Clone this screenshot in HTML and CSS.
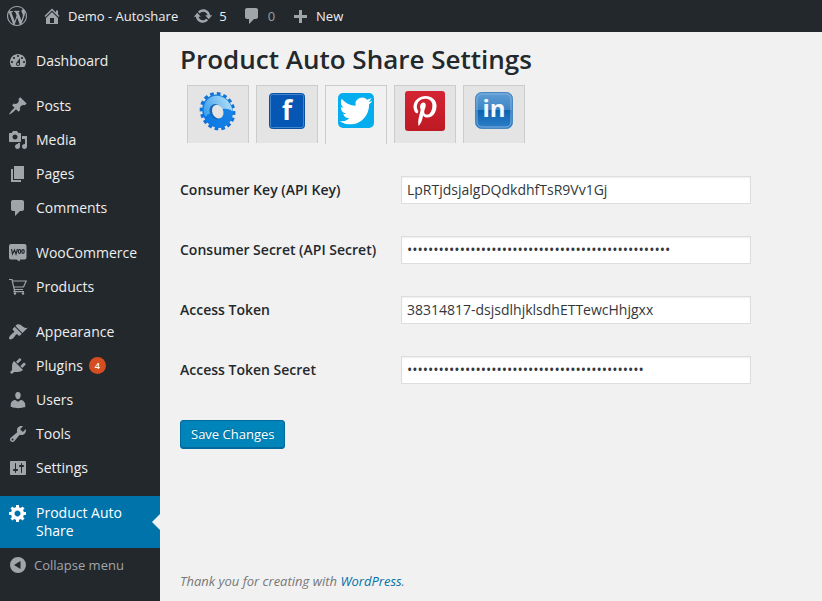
FILE: index.html
```html
<!DOCTYPE html>
<html lang="en">
<head>
<meta charset="utf-8">
<meta name="viewport" content="width=device-width, initial-scale=1">
<title>Product Auto Share Settings</title>
<link rel="stylesheet" href="styles.css">
</head>
<body>
<header class="adminbar">
  <a class="bar-item" href="#" aria-label="About WordPress"><svg class="icon" viewBox="0 0 20 20"><path d="M20 10c0-5.51-4.49-10-10-10C4.48 0 0 4.49 0 10c0 5.52 4.48 10 10 10 5.51 0 10-4.48 10-10zM7.78 15.37L4.37 6.22c.55-.02 1.17-.08 1.17-.08.5-.06.44-1.13-.06-1.11 0 0-1.45.11-2.37.11-.18 0-.37 0-.58-.01C4.12 2.69 6.87 1.11 10 1.11c2.33 0 4.45.87 6.05 2.34-.68-.11-1.65.39-1.65 1.58 0 .74.45 1.36.9 2.1.35.61.55 1.36.55 2.46 0 1.49-1.4 5-1.4 5l-3.03-8.37c.54-.02.82-.17.82-.17.5-.05.44-1.25-.06-1.22 0 0-1.44.12-2.38.12-.87 0-2.33-.12-2.33-.12-.5-.03-.56 1.2-.06 1.22l.92.08 1.26 3.41zM17.41 10c.24-.64.74-1.87.43-4.25.7 1.29 1.05 2.71 1.05 4.25 0 3.29-1.73 6.24-4.4 7.78.97-2.59 1.94-5.2 2.92-7.78zM6.1 18.09C3.12 16.65 1.11 13.53 1.11 10c0-1.3.23-2.48.72-3.59C3.25 10.3 4.67 14.2 6.1 18.09zm4.03-6.63l2.58 6.98c-.86.29-1.76.45-2.71.45-.79 0-1.57-.11-2.29-.33.81-2.38 1.62-4.74 2.42-7.1z"/></svg></a>
  <a class="bar-item" href="#"><svg class="icon" viewBox="0 0 20 20"><path d="M16 8.5l1.53 1.53-1.06 1.06L10 4.6l-6.47 6.49-1.06-1.06L10 2.5l4 4v-2h2v4zm-6-2.46l6 5.99V18H4v-5.97zM12 17v-5H8v5h4z"/></svg>Demo - Autoshare</a>
  <a class="bar-item" href="#"><svg class="icon" viewBox="0 0 20 20"><path d="M10.2 3.28c3.53 0 6.43 2.61 6.92 6h2.08l-3.5 4-3.5-4h2.32c-.45-1.97-2.21-3.45-4.32-3.45-1.45 0-2.73.71-3.54 1.78L4.95 5.66C6.23 4.2 8.11 3.28 10.2 3.28zm-.4 13.44c-3.52 0-6.43-2.61-6.92-6H.8l3.5-4c1.17 1.33 2.33 2.67 3.5 4H5.48c.45 1.97 2.21 3.45 4.32 3.45 1.45 0 2.73-.71 3.54-1.78l1.71 1.95c-1.28 1.46-3.15 2.38-5.25 2.38z"/></svg>5</a>
  <a class="bar-item muted" href="#"><svg class="icon" viewBox="0 0 20 20"><path d="M5 2h9c1.1 0 2 .9 2 2v7c0 1.1-.9 2-2 2h-2l-5 5v-5H5c-1.1 0-2-.9-2-2V4c0-1.1.9-2 2-2z"/></svg>0</a>
  <a class="bar-item" href="#"><svg class="icon" viewBox="0 0 20 20"><path d="M17 9v3h-5v5H9v-5H4V9h5V4h3v5z"/></svg>New</a>
</header>
<div class="layout">
  <nav class="sidebar" aria-label="Main menu">
    <ul class="menu">
      <li><a href="#"><svg class="icon" viewBox="0 0 20 20"><path fill-rule="evenodd" d="M3.76 16h12.48c1.1-1.37 1.76-3.11 1.76-5 0-4.42-3.58-8-8-8s-8 3.58-8 8c0 1.89.66 3.63 1.76 5zM10 4c.55 0 1 .45 1 1s-.45 1-1 1-1-.45-1-1 .45-1 1-1zM6 6c.55 0 1 .45 1 1s-.45 1-1 1-1-.45-1-1 .45-1 1-1zm8 0c.55 0 1 .45 1 1s-.45 1-1 1-1-.45-1-1 .45-1 1-1zm-5.37 5.55L12 7v6c0 1.1-.9 2-2 2s-2-.9-2-2c0-.57.24-1.08.63-1.45zM4 10c.55 0 1 .45 1 1s-.45 1-1 1-1-.45-1-1 .45-1 1-1zm12 0c.55 0 1 .45 1 1s-.45 1-1 1-1-.45-1-1 .45-1 1-1zm-5 3c0-.55-.45-1-1-1s-1 .45-1 1 .45 1 1 1 1-.45 1-1z"/></svg>Dashboard</a></li>
    </ul>
    <ul class="menu">
      <li><a href="#"><svg class="icon" viewBox="0 0 20 20"><path d="M10.44 3.02l1.82-1.82 6.36 6.35-1.83 1.82c-1.05-.68-2.48-.57-3.41.36l-.75.75c-.92.93-1.04 2.35-.35 3.41l-1.83 1.82-2.41-2.41-2.8 2.79c-.42.42-3.38 2.71-3.8 2.29s1.86-3.39 2.28-3.81l2.79-2.79L4.1 9.36l1.83-1.82c1.05.69 2.48.57 3.4-.36l.75-.75c.93-.92 1.05-2.35.36-3.41z"/></svg>Posts</a></li>
      <li><a href="#"><svg class="icon" viewBox="0 0 20 20"><path d="M13 11V4c0-.55-.45-1-1-1h-1.67L9 1H5L3.67 3H2c-.55 0-1 .45-1 1v7c0 .55.45 1 1 1h10c.55 0 1-.45 1-1zM7 4.5c1.38 0 2.5 1.12 2.5 2.5S8.38 9.5 7 9.5 4.5 8.38 4.5 7 5.62 4.5 7 4.5zM14 6h5v10.5c0 1.38-1.12 2.5-2.5 2.5S14 17.88 14 16.5s1.12-2.5 2.5-2.5c.17 0 .34.02.5.05V9h-3V6zm-4 8.05V13h2v3.5c0 1.38-1.12 2.5-2.5 2.5S7 17.88 7 16.5 8.12 14 9.5 14c.17 0 .34.02.5.05z"/></svg>Media</a></li>
      <li><a href="#"><svg class="icon" viewBox="0 0 20 20"><path d="M6 15V2h10v13H6zm-1 1h8v2H3V5h2v11z"/></svg>Pages</a></li>
      <li><a href="#"><svg class="icon" viewBox="0 0 20 20"><path d="M5 2h9c1.1 0 2 .9 2 2v7c0 1.1-.9 2-2 2h-2l-5 5v-5H5c-1.1 0-2-.9-2-2V4c0-1.1.9-2 2-2z"/></svg>Comments</a></li>
    </ul>
    <ul class="menu">
      <li><a href="#"><svg class="icon" viewBox="0 0 20 20"><path d="M3 1h13.5a2 2 0 0 1 2 2v11.5a2 2 0 0 1-2 2h-4.5l-.5 2-3-2H3a2 2 0 0 1-2-2V3a2 2 0 0 1 2-2z"/><path class="cutout" d="M3.500 6l1 5 2-4 1.500 4 1.500-5"/><ellipse class="cutout" cx="11.500" cy="8.500" rx="1.200" ry="1.800"/><ellipse class="cutout" cx="15" cy="8.500" rx="1.200" ry="1.800"/></svg>WooCommerce</a></li>
      <li><a href="#"><svg class="icon" viewBox="0 0 20 20"><path class="line" d="M1 2.5h3l2.200 10H15M4.500 4h13.700l-2.700 6H5.800M7 12.500l-1 2.200h10"/><circle cx="7" cy="16.500" r="1.200"/><circle cx="15" cy="16.500" r="1.200"/></svg>Products</a></li>
    </ul>
    <ul class="menu">
      <li><a href="#"><svg class="icon" viewBox="0 0 20 20"><path d="M14.48 11.06L7.41 3.99l1.5-1.5c.5-.56 2.3-.47 3.51.32 1.21.8 1.43 1.28 2.91 2.1 1.18.64 2.45 1.26 4.45.85zm-.71.71L6.7 4.7 4.93 6.47c-.39.39-.39 1.02 0 1.41l1.06 1.06c.39.39.39 1.03 0 1.42-.6.6-1.43 1.11-2.21 1.69-.35.26-.7.53-1.01.84C1.43 14.23.4 16.08 1.4 17.07c.99 1 2.84-.03 4.18-1.36.31-.31.58-.66.85-1.02.57-.78 1.08-1.61 1.69-2.21.39-.39 1.02-.39 1.41 0l1.06 1.06c.39.39 1.02.39 1.41 0z"/></svg>Appearance</a></li>
      <li><a href="#"><svg class="icon" viewBox="0 0 20 20"><path d="M13.11 4.36L9.87 7.6 8 5.73l3.24-3.24c.35-.34 1.05-.2 1.56.32.52.51.66 1.21.31 1.55zm-8 1.77l.91-1.12 9.01 9.01-1.19.84c-.71.71-2.63 1.16-3.82 1.16H6.14L4.9 17.26c-.59.59-1.54.59-2.12 0-.59-.58-.59-1.53 0-2.12l1.24-1.24v-3.88c0-1.13.4-3.19 1.09-3.89zm7.26 3.97l3.24-3.24c.34-.35 1.04-.21 1.55.31.52.51.66 1.21.31 1.55l-3.24 3.25z"/></svg>Plugins <span class="count">4</span></a></li>
      <li><a href="#"><svg class="icon" viewBox="0 0 20 20"><path d="M10 9.25c-2.27 0-2.73-3.44-2.73-3.44C7 4.02 7.82 2 9.97 2c2.16 0 2.98 2.02 2.71 3.81 0 0-.41 3.44-2.68 3.44zm0 2.57L12.72 10c2.39 0 4.52 2.33 4.52 4.53v2.49s-3.65 1.13-7.24 1.13c-3.65 0-7.24-1.13-7.24-1.13v-2.49c0-2.25 1.94-4.48 4.47-4.48z"/></svg>Users</a></li>
      <li><a href="#"><svg class="icon" viewBox="0 0 20 20"><path d="M16.68 9.77c-1.34 1.34-3.3 1.67-4.95.99l-5.41 6.52c-.99.99-2.59.99-3.58 0s-.99-2.59 0-3.57l6.52-5.42c-.68-1.65-.35-3.61.99-4.95 1.28-1.28 3.12-1.62 4.72-1.06l-2.89 2.89 2.82 2.82 2.86-2.87c.53 1.58.18 3.39-1.08 4.65zM3.81 16.21c.4.39 1.04.39 1.43 0 .4-.4.4-1.04 0-1.43-.39-.4-1.03-.4-1.43 0-.39.39-.39 1.03 0 1.43z"/></svg>Tools</a></li>
      <li><a href="#"><svg class="icon" viewBox="0 0 20 20"><path fill-rule="evenodd" d="M18 16V4c0-.55-.45-1-1-1H3c-.55 0-1 .45-1 1v12c0 .55.45 1 1 1h14c.55 0 1-.45 1-1zM8 11h1c.55 0 1 .45 1 1s-.45 1-1 1H8v1.5c0 .28-.22.5-.5.5s-.5-.22-.5-.5V13H6c-.55 0-1-.45-1-1s.45-1 1-1h1V5.500c0-.28.22-.5.5-.5s.5.22.5.5V11zm5-2h-1c-.55 0-1-.45-1-1s.45-1 1-1h1V5.500c0-.28.22-.5.5-.5s.5.22.5.5V7h1c.55 0 1 .45 1 1s-.45 1-1 1h-1v5.500c0 .28-.22.5-.5.5s-.5-.22-.5-.5V9z"/></svg>Settings</a></li>
    </ul>
    <ul class="menu">
      <li><a class="current" href="#" aria-current="page"><svg class="icon" viewBox="0 0 20 20"><path d="M18 12h-2.18c-.17.7-.44 1.35-.81 1.93l1.54 1.54-2.1 2.1-1.54-1.54c-.58.36-1.23.63-1.91.79V19H8v-2.18c-.68-.16-1.33-.43-1.91-.79l-1.54 1.54-2.12-2.12 1.54-1.54c-.36-.58-.63-1.23-.79-1.91H1V9.03h2.17c.16-.7.44-1.35.8-1.94L2.43 5.55l2.1-2.1 1.54 1.54c.58-.37 1.24-.64 1.93-.81V2h3v2.18c.68.16 1.33.43 1.91.79l1.54-1.54 2.12 2.12-1.54 1.54c.36.59.64 1.24.8 1.94H18V12zm-8.5 1.5c1.66 0 3-1.34 3-3s-1.34-3-3-3-3 1.34-3 3 1.34 3 3 3z"/></svg>Product Auto Share</a></li>
    </ul>
    <button class="collapse" type="button"><svg class="icon" viewBox="0 0 20 20"><path fill-rule="evenodd" d="M10 2a8 8 0 1 1 0 16 8 8 0 0 1 0-16zm2.500 4L6 10l6.500 4z"/></svg>Collapse menu</button>
  </nav>
  <main class="content">
    <h1>Product Auto Share Settings</h1>
    <nav class="tabs" aria-label="Networks">
      <a class="tab" href="#" aria-label="General"><svg viewBox="0 0 40 40">
        <defs>
          <linearGradient id="gear" x1="0" y1="0" x2="1" y2="0"><stop offset="0" stop-color="#0a78e6"/><stop offset="1" stop-color="#1a84e4"/></linearGradient>
          <linearGradient id="gloss" x1="0" y1="0" x2="1" y2="0"><stop offset="0" stop-color="#3c9fec"/><stop offset="1" stop-color="#a8daf8"/></linearGradient>
        </defs>
        <g transform="rotate(-24 20 20)">
          <ellipse cx="19.500" cy="20" rx="15" ry="17" fill="none" stroke="#1272d8" stroke-width="5" pathLength="96" stroke-dasharray="3.400 2.600"/>
          <ellipse cx="19.500" cy="20" rx="15" ry="17" fill="url(#gear)"/>
          <path d="M6 20C6 11 12 4.500 20 4.500S34 12 34 21c0 2-.5 4-1 5-4-7-15-9-27-6z" fill="url(#gloss)"/>
          <ellipse cx="18" cy="20" rx="6.500" ry="8" fill="#1668b8"/>
          <ellipse cx="19.500" cy="20.500" rx="5.500" ry="7" fill="#e4e4e4"/>
        </g></svg></a>
      <a class="tab" href="#" aria-label="Facebook"><svg viewBox="0 0 40 40"><rect x="2.500" y="2.500" width="35" height="35" rx="3" fill="#0657b3" stroke="#0b4fa0"/><rect x="3.500" y="3.500" width="33" height="33" rx="2" fill="none" stroke="#3f86cf"/><text class="mark-f" x="20" y="29" text-anchor="middle">f</text></svg></a>
      <a class="tab active" href="#" aria-label="Twitter" aria-current="true"><svg viewBox="0 0 40 40"><rect x="2" y="2" width="36" height="35" rx="5" fill="#03adee"/><path transform="translate(3.500 3.500) scale(1.370)" fill="#fff" d="M23.953 4.57a10 10 0 01-2.825.775 4.958 4.958 0 002.163-2.723c-.951.555-2.005.959-3.127 1.184a4.920 4.920 0 00-8.384 4.482C7.69 8.095 4.067 6.13 1.64 3.162a4.822 4.822 0 00-.666 2.475c0 1.71.87 3.213 2.188 4.096a4.904 4.904 0 01-2.228-.616v.06a4.923 4.923 0 003.946 4.827 4.996 4.996 0 01-2.212.085 4.936 4.936 0 004.604 3.417 9.867 9.867 0 01-6.102 2.105c-.39 0-.779-.023-1.17-.067a13.995 13.995 0 007.557 2.209c9.053 0 13.998-7.496 13.998-13.985 0-.21 0-.42-.015-.63A9.935 9.935 0 0024 4.59z"/></svg></a>
      <a class="tab" href="#" aria-label="Pinterest"><svg viewBox="0 0 40 40"><defs><linearGradient id="pin" x1="0" y1="0" x2="0" y2="1"><stop offset="0" stop-color="#d42433"/><stop offset="1" stop-color="#bd1a24"/></linearGradient></defs><rect width="40" height="40" rx="3" fill="url(#pin)"/><path transform="translate(8.500 4.500) scale(.06)" fill="#fff" d="M204 6.500C101.400 6.500 0 74.900 0 185.600 0 256 39.600 296 63.600 296c9.900 0 15.600-27.600 15.600-35.400 0-9.300-23.700-29.100-23.700-67.800 0-80.400 61.200-137.400 140.400-137.400 68.100 0 118.500 38.700 118.500 109.800 0 53.100-21.300 152.700-90.300 152.700-24.900 0-46.200-18-46.200-43.800 0-37.800 26.400-74.400 26.400-113.400 0-66.200-93.900-54.200-93.900 25.800 0 16.800 2.100 35.400 9.600 50.700-13.800 59.400-42 147.900-42 209.100 0 18.900 2.700 37.500 4.500 56.400 3.400 3.800 1.700 3.400 6.900 1.500 50.400-69 48.600-82.500 71.400-172.800 12.300 23.400 44.100 36 69.300 36 106.200 0 153.900-103.500 153.900-196.800C384 71.300 298.200 6.500 204 6.500z"/></svg></a>
      <a class="tab" href="#" aria-label="LinkedIn"><svg viewBox="0 0 40 40"><defs><linearGradient id="lnk" x1="0" y1="0" x2="0" y2="1"><stop offset="0" stop-color="#5f9dd4"/><stop offset=".5" stop-color="#3c84c6"/><stop offset=".5" stop-color="#0d62b0"/><stop offset="1" stop-color="#2f80c8"/></linearGradient></defs><rect x="1.500" y="1.500" width="37" height="36" rx="6" fill="url(#lnk)" stroke="#4a86c0"/><rect x="3" y="3" width="34" height="33" rx="5" fill="none" stroke="#7fb2e0"/><text class="mark-in" x="20" y="26" text-anchor="middle">in</text></svg></a>
    </nav>
    <form class="settings">
      <div class="field"><label for="ckey">Consumer Key (API Key)</label><input id="ckey" type="text" value="LpRTjdsjalgDQdkdhfTsR9Vv1Gj"></div>
      <div class="field"><label for="csecret">Consumer Secret (API Secret)</label><input id="csecret" type="password" value="00000000000000000000000000000000000000000000000000"></div>
      <div class="field"><label for="token">Access Token</label><input id="token" type="text" value="38314817-dsjsdlhjklsdhETTewcHhjgxx"></div>
      <div class="field"><label for="tsecret">Access Token Secret</label><input id="tsecret" type="password" value="000000000000000000000000000000000000000000000"></div>
      <button class="save" type="submit">Save Changes</button>
    </form>
    <footer>Thank you for creating with <a href="#">WordPress</a>.</footer>
  </main>
</div>
</body>
</html>
```
FILE: styles.css
```css
* { box-sizing: border-box; }
body {
  margin: 0;
  min-height: 100vh;
  display: flex;
  flex-direction: column;
  background: #f1f1f1;
  color: #23282d;
  font: 14px/18px "Open Sans", sans-serif;
}
a { text-decoration: none; }
.icon { flex: none; width: 20px; height: 20px; fill: #a0a5aa; }
.icon .cutout { fill: none; stroke: #23282d; stroke-width: 1.2; }
.icon .line { fill: none; stroke: #a0a5aa; stroke-width: 1.2; }

.adminbar {
  display: flex;
  align-items: center;
  gap: 15px;
  height: 32px;
  padding: 0 7px;
  background: #23282d;
  font-size: 13px;
}
.bar-item { display: flex; align-items: center; gap: 6px; color: #eee; }
.bar-item.muted { color: #9b9fa3; }

.layout { flex: 1; display: flex; }
.sidebar { flex: none; width: 160px; padding-top: 12px; background: #23282d; }
.menu { list-style: none; margin: 0 0 11px; padding: 0; }
.menu:last-of-type { margin: 0; }
.menu a, .collapse {
  display: flex;
  gap: 8px;
  padding: 8px;
  color: #eee;
}
.menu a { gap: 6px 8px; }
.menu .icon, .collapse .icon { margin: -1px 0; }
.menu a.current {
  position: relative;
  padding-right: 24px;
  background: #0073aa;
  color: #fff;
}
.menu .current .icon { fill: #fff; }
.current::after {
  content: "";
  position: absolute;
  right: 0;
  top: 50%;
  margin-top: -8px;
  border: 8px solid transparent;
  border-right-color: #f1f1f1;
  border-left: 0;
}
.count {
  width: 17px;
  height: 17px;
  margin-left: -2px;
  border-radius: 50%;
  background: #d54e21;
  color: #fff;
  font-size: 9px;
  line-height: 17px;
  font-weight: 600;
  text-align: center;
}
.collapse {
  width: 100%;
  gap: 6px;
  border: 0;
  background: none;
  color: #a0a5aa;
  font: 13px/18px "Open Sans", sans-serif;
  text-align: left;
}

.content { flex: 1; display: flex; flex-direction: column; padding: 10px 20px 11px; }
h1 { margin: 0; font-size: 26px; line-height: 34px; font-weight: 600; }
.tabs { display: flex; align-items: flex-start; gap: 7px; margin: 9px 0 0 7px; }
.tab {
  padding: 5px 10px 12px;
  border: 1px solid #ccc;
  border-bottom: 0;
  background: #e4e4e4;
}
.tab svg { display: block; width: 40px; height: 40px; }
.tab.active { margin-bottom: -1px; padding-bottom: 13px; background: #f1f1f1; }
.mark-f { fill: #fff; font: 700 26px "Open Sans", sans-serif; }
.mark-in { fill: #f4f8fc; font: 700 24px "Open Sans", sans-serif; }

.settings { margin-top: 33px; }
.field { display: flex; align-items: center; margin-bottom: 32px; }
.field label { flex: none; width: 221px; font-weight: 600; }
.field input {
  flex: 0 1 350px;
  min-width: 0;
  height: 28px;
  padding: 2px 5px 4px;
  border: 1px solid #ddd;
  background: #fff;
  box-shadow: inset 0 1px 2px rgba(0, 0, 0, .07);
  color: #32373c;
  font: 14px/20px "Open Sans", sans-serif;
}
.save {
  display: block;
  margin-top: 36px;
  height: 29px;
  padding: 0 10px 2px;
  border: 1px solid #006a9c;
  border-radius: 3px;
  background: #0085ba;
  box-shadow: inset 0 -1px 0 #006a9c;
  color: #fff;
  font: 13px/24px "Open Sans", sans-serif;
  text-shadow: 0 -1px 1px #006799;
}
footer { margin-top: auto; color: #777; font-size: 13px; font-style: italic; }
footer a { color: #0073aa; }
```
